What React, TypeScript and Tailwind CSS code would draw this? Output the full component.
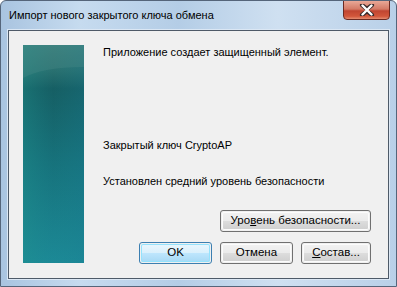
import React from 'react';

const font = { fontFamily: '"Liberation Sans", Arial, sans-serif' };

function Btn({ children, w, primary }: { children: React.ReactNode; w: string; primary?: boolean }) {
  return (
    <div
      className={`${w} h-[22px] rounded-[3px] border ${primary ? 'border-[#3c7fb1]' : 'border-[#707070]'} p-px`}
    >
      <div
        className={`w-full h-full rounded-[2px] flex items-center justify-center text-[11.5px] text-black ${
          primary
            ? 'bg-[linear-gradient(#eaf6fd_0%,#d9f0fc_50%,#bee6fd_51%,#a7d9f5_100%)] shadow-[inset_0_0_0_1px_#94e2fc]'
            : 'bg-[linear-gradient(#f2f2f2_0%,#ebebeb_50%,#dddddd_51%,#cfcfcf_100%)] shadow-[inset_0_0_0_1px_#fcfcfc]'
        }`}
      >
        {children}
      </div>
    </div>
  );
}

function Panel() {
  return (
    <svg width="61" height="218" viewBox="0 0 61 218" className="shrink-0">
      <defs>
        <linearGradient id="pg" x1="0" y1="0" x2="0" y2="1">
          <stop offset="0" stopColor="#3a7b78" />
          <stop offset="0.12" stopColor="#2a6d6c" />
          <stop offset="0.2" stopColor="#155a5f" />
          <stop offset="0.55" stopColor="#16707a" />
          <stop offset="1" stopColor="#1c8997" />
        </linearGradient>
        <linearGradient id="ph" x1="0" y1="0" x2="1" y2="0">
          <stop offset="0" stopColor="#21958f" stopOpacity="0.4" />
          <stop offset="0.5" stopColor="#1b8a90" stopOpacity="0.1" />
          <stop offset="1" stopColor="#1a7f95" stopOpacity="0.3" />
        </linearGradient>
      </defs>
      <rect width="61" height="218" fill="url(#pg)" />
      <rect width="61" height="218" fill="url(#ph)" />
      <path d="M0 33 Q 20 22 61 22 L61 0 L0 0 Z" fill="#4f8f8b" opacity="0.3" />
    </svg>
  );
}

export default function App() {
  return (
    <div
      className="w-[397px] h-[287px] relative overflow-hidden rounded-t-[6px] border border-[#55657a] bg-[linear-gradient(90deg,#a9c4e0_0%,#c6dbef_20%,#b4cde6_45%,#cfe0f1_70%,#b9d0e8_100%)] flex flex-col"
      style={font}
    >
      <div className="h-[29px] shrink-0 flex items-center pl-[8px] text-[11px] text-black">
        Импорт нового закрытого ключа обмена
      </div>
      <div className="absolute right-[6px] top-[-1px] w-[47px] h-[20px] rounded-b-[4px] border border-[#6b2a22] bg-[linear-gradient(#e9a897_0%,#d47a66_45%,#c04531_55%,#d2573b_85%,#e48d72_100%)] flex items-center justify-center">
        <svg width="16" height="12" viewBox="0 0 16 12">
          <path d="M3 1 L8 5 L13 1 M3 11 L8 7 L13 11" stroke="#3a2a2a" strokeWidth="4.2" fill="none" strokeLinecap="round" />
          <path d="M3.5 1.5 L12.5 10.5 M12.5 1.5 L3.5 10.5" stroke="#ffffff" strokeWidth="2.4" strokeLinecap="round" />
        </svg>
      </div>
      <div className="mx-[7px] h-[249px] shrink-0 border border-[#4e5a68] bg-[#f0f0f0] shadow-[0_0_0_1px_#dbe7f4] flex text-[11px] text-black">
        <div className="pl-[14px] pt-[14px]">
          <Panel />
        </div>
        <div className="flex-1 flex flex-col pl-[19px] pr-[17px] pt-[14px]">
          <div className="leading-[15px]">Приложение создает защищенный элемент.</div>
          <div className="leading-[15px] mt-[78px]">Закрытый ключ CryptoAP</div>
          <div className="leading-[15px] mt-[21px]">Установлен средний уровень безопасности</div>
          <div className="flex justify-end mt-[21px]">
            <Btn w="w-[151px]">
              Уро<span className="underline">в</span>ень безопасности...
            </Btn>
          </div>
          <div className="flex justify-end gap-[8px] mt-[10px]">
            <Btn w="w-[73px]" primary>
              OK
            </Btn>
            <Btn w="w-[73px]">Отмена</Btn>
            <Btn w="w-[70px]">
              <span className="underline">С</span>остав...
            </Btn>
          </div>
        </div>
      </div>
    </div>
  );
}
